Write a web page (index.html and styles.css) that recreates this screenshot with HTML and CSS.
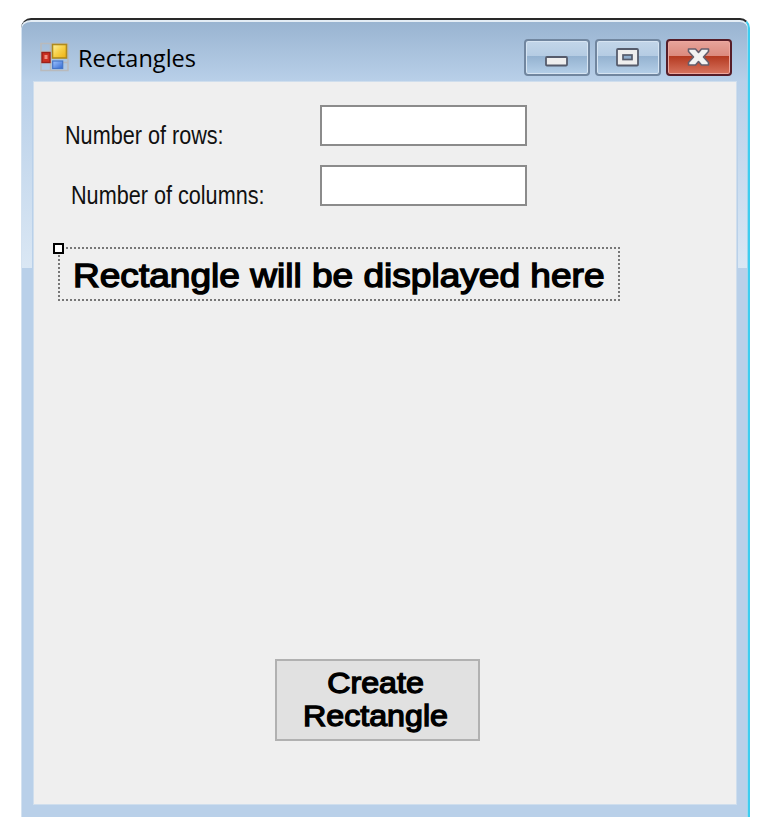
FILE: index.html
```
<!DOCTYPE html>
<html lang="en">
<head>
<meta charset="utf-8">
<title>Rectangles</title>
<link rel="stylesheet" href="styles.css">
</head>
<body>
<main class="window">
  <header class="titlebar">
    <svg class="app-icon" width="30" height="30" viewBox="0 0 30 30">
      <defs>
        <linearGradient id="gold" x2="1" y2="1"><stop stop-color="#fff3a0"/><stop offset=".5" stop-color="#f7cf45"/><stop offset="1" stop-color="#eeb010"/></linearGradient>
        <linearGradient id="blue" x2="1" y2="1"><stop stop-color="#9fc5ff"/><stop offset="1" stop-color="#3268d0"/></linearGradient>
      </defs>
      <path d="M1 1.500h27v27H1zM10.500 1.500v27M1 9.500h9M1 20.500h27" fill="none" stroke="#b9babc" stroke-width="1.500"/>
      <rect x="12.500" y="2.500" width="14" height="13.500" fill="url(#gold)" stroke="#b08a1c" stroke-width="1.600"/>
      <rect x="2" y="10.500" width="8" height="10" fill="#cc2f20" stroke="#9c2018" stroke-width="1.400"/>
      <rect x="4.500" y="13" width="3" height="4" fill="#f08d7c"/>
      <rect x="12.700" y="19" width="10" height="7.500" fill="url(#blue)" stroke="#4476c8" stroke-width="1.200"/>
    </svg>
    <h1 class="title">Rectangles</h1>
    <div class="controls">
      <button class="control" aria-label="Minimize">
        <svg width="64" height="36" viewBox="0 0 64 36"><rect x="21" y="17" width="21" height="8.500" rx="1" fill="#eee" stroke="#555b6b" stroke-width="1.800"/></svg>
      </button>
      <button class="control" aria-label="Maximize">
        <svg width="64" height="36" viewBox="0 0 64 36"><rect x="21" y="9" width="21" height="16.500" rx="1" fill="#eee" stroke="#555b6b" stroke-width="1.800"/><rect x="27" y="15" width="9" height="4.500" fill="#8fadcc" stroke="#555b6b" stroke-width="1.700"/></svg>
      </button>
      <button class="control close" aria-label="Close">
        <svg width="64" height="36" viewBox="0 0 64 36"><path d="M21.500 9h7l3 3.500L34.500 9h7v2.500L36.500 17l5 5.500V25h-7l-3-3.500-3 3.500h-7v-2.500l5-5.500-5-5.500z" fill="#f2f2f2" stroke="#655e6c" stroke-width="1.600" stroke-linejoin="round"/></svg>
      </button>
    </div>
  </header>
  <section class="client">
    <form class="form">
      <div class="field"><label class="label" for="rows">Number of rows:</label><input class="input" id="rows"></div>
      <div class="field"><label class="label columns" for="cols">Number of columns:</label><input class="input" id="cols"></div>
      <div class="display"><i class="handle"></i><span class="display-text">Rectangle will be displayed here</span></div>
      <button class="create" type="button"><span class="create-text">Create<br>Rectangle</span></button>
    </form>
  </section>
</main>
</body>
</html>
```
FILE: styles.css
```
* { box-sizing: border-box; }
body { margin: 0; background: #fff; font-family: "Liberation Sans", Arial, sans-serif; color: #000; }
.window {
  position: relative;
  width: 729px;
  height: 799px;
  margin: 18px 0 0 21px;
  padding: 0 12px 13px 13px;
  border-top: 2px solid #292929;
  border-right: 2px solid #3dcdf0;
  border-radius: 10px 10px 0 0;
  box-shadow: inset 0 2px #e4edf5, inset 1px 0 #d4e2f0, inset -1px 0 #9ed8ee;
  background:
    linear-gradient(#b9d0e9, #dae7f4) 1px 62px / 10px 186px no-repeat,
    linear-gradient(#b9d0e9, #dae7f4) 717px 62px / 9px 186px no-repeat,
    linear-gradient(#98b3d0, #b9d0e9 62px);
}
.titlebar { height: 62px; display: flex; align-items: flex-start; padding: 9px 4px 0 6px; }
.app-icon { margin-top: 13px; flex: none; }
.title {
  margin: 11px 0 0 8px;
  font: 24.5px/36px "Open Sans", sans-serif;
  transform: scaleX(.96);
  transform-origin: left;
}
.controls { display: flex; gap: 5px; margin: 10px 0 0 auto; }
.control {
  width: 66px;
  height: 37px;
  padding: 0;
  border: 2px solid #71869f;
  border-radius: 4px;
  box-shadow: inset 0 0 0 1px #d6e4f2;
  background: linear-gradient(#c3d6e9, #b5cce3 44%, #94b2d0 46%, #b5cfe8);
  display: grid;
  place-items: center;
  overflow: hidden;
}
.control svg { margin: -2px; }
.close {
  border-color: #561d28;
  box-shadow: inset 0 0 0 1px #eea79e;
  background: linear-gradient(#e7a49b, #dc8a7e 44%, #b43920 46%, #d7745f);
}
.client { height: 722px; background: #efefef; box-shadow: 0 0 0 1px #cfdeed; }
.form { display: flex; flex-direction: column; padding: 23px 0 0 24px; }
.field { display: flex; height: 41px; margin-bottom: 19px; }
.label {
  width: 262px;
  margin: 16px 0 0 7px;
  font-size: 25px;
  line-height: 28px;
  color: #111;
  transform: scaleX(.865);
  transform-origin: left;
  white-space: nowrap;
}
.columns { width: 256px; margin-left: 13px; }
.input {
  width: 207px;
  height: 41px;
  margin-left: -7px;
  border: 2px solid #8b8b8b;
  background: #fff;
  border-radius: 0;
  outline: 0;
}
.display {
  --h: repeating-linear-gradient(90deg, #777 0 2px, #efefef 2px 4px);
  --v: repeating-linear-gradient(#777 0 2px, #efefef 2px 4px);
  position: relative;
  width: 562px;
  height: 54px;
  margin-top: 22px;
  padding: 9px 0 0 15px;
  background: var(--h) top / 100% 2px no-repeat, var(--h) bottom / 100% 2px no-repeat,
    var(--v) left / 2px 100% no-repeat, var(--v) right / 2px 100% no-repeat;
}
.handle { position: absolute; left: -5px; top: -4px; width: 11px; height: 11px; border: 2px solid #000; background: #fff; }
.display-text {
  display: block;
  font-size: 34px;
  line-height: 38px;
  -webkit-text-stroke: 1.4px #000;
  white-space: nowrap;
  transform: scaleX(1.09);
  transform-origin: left;
}
.create {
  width: 205px;
  height: 82px;
  margin: 358px 0 0 217px;
  padding: 0;
  border: 2px solid #b1b1b1;
  background: #e1e1e1;
  color: #000;
}
.create-text {
  display: block;
  font: 29px/33px "Liberation Sans", Arial, sans-serif;
  -webkit-text-stroke: 1.3px #000;
  transform: translateX(-2px) scaleX(1.11);
}
```
